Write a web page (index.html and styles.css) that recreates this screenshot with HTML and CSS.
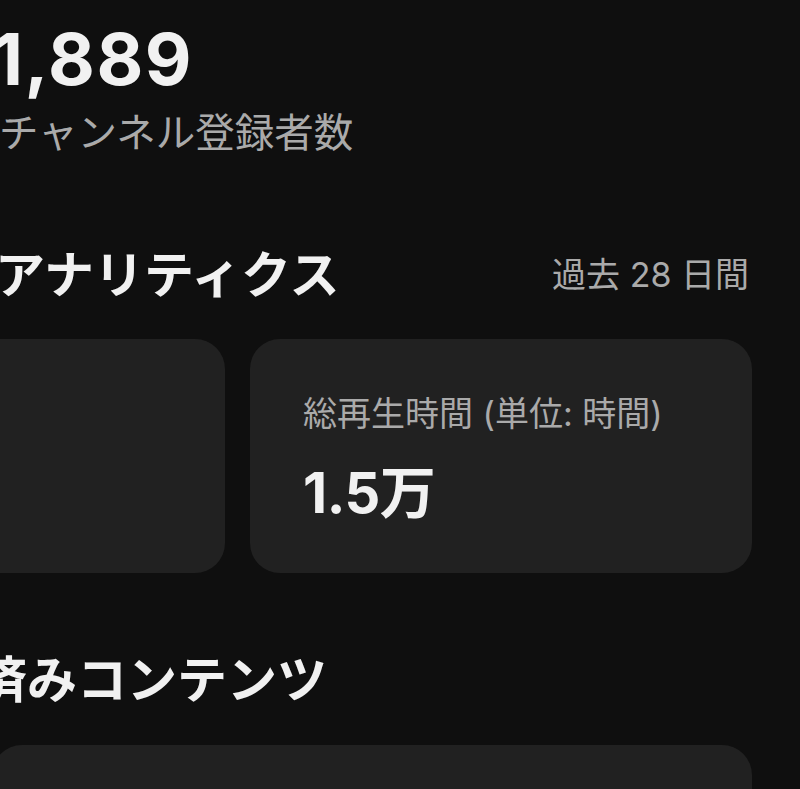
FILE: index.html
```html
<!DOCTYPE html>
<html lang="ja">
<head>
    <meta charset="UTF-8">
    <meta name="viewport" content="width=device-width, initial-scale=1.0">
    <title>チャンネル ダッシュボード</title>
    <link rel="stylesheet" href="styles.css">
</head>
<body>
<main class="dashboard">
    <!-- 登録者 -->
    <section class="summary">
        <div class="subs-count">1,889</div>
        <div class="subs-label">チャンネル登録者数</div>
    </section>

    <!-- アナリティクス -->
    <section class="analytics">
        <div class="section-head">
            <h2 class="section-title">アナリティクス</h2>
            <span class="period">過去 28 日間</span>
        </div>

        <div class="metric-row">
            <div class="metric-card">
                <div class="metric-label">視聴回数</div>
                <div class="metric-value">32.4万</div>
            </div>
            <div class="metric-card">
                <div class="metric-label">総再生時間 (単位: 時間)</div>
                <div class="metric-value">1.5万</div>
            </div>
        </div>
    </section>

    <!-- 公開済みコンテンツ -->
    <section class="published">
        <h2 class="section-title published-title">公開済みコンテンツ</h2>
        <div class="content-card"></div>
    </section>
</main>
</body>
</html>
```

FILE: styles.css
```css
html, body {
    margin: 0;
    height: 100%;
}

body {
    background-color: #0f0f0f;
    color: #f1f1f1;
    font-family: Inter, 'Noto Sans CJK JP', sans-serif;
    overflow: hidden;
}

.dashboard {
    margin-left: -8px;
    padding: 23px 48px 0 0;
}

.subs-count {
    font-size: 72px;
    line-height: 1;
    font-weight: 700;
    letter-spacing: 1.5px;
}

.subs-label {
    margin-top: 19px;
    font-size: 39.5px;
    line-height: 1;
    color: #aaaaaa;
    padding-left: 7px;
}

.analytics {
    margin-top: 96px;
}

.section-head {
    display: flex;
    justify-content: space-between;
    align-items: center;
}

.section-title {
    margin: 0 0 0 3px;
    font-size: 50px;
    line-height: 1;
    font-weight: 700;
}

.period {
    font-size: 34px;
    line-height: 1;
    color: #aaaaaa;
    padding-right: 3px;
}

.metric-row {
    display: grid;
    grid-template-columns: 1fr 1fr;
    gap: 25px;
    margin-left: -269px;
    margin-top: 39px;
}

.metric-card {
    background-color: #212121;
    border-radius: 30px;
    height: 234px;
    padding: 58px 50px 0 53px;
    box-sizing: border-box;
}

.metric-label {
    font-size: 34px;
    line-height: 1;
    color: #aaaaaa;
}

.metric-value {
    margin-top: 34px;
    font-size: 56px;
    line-height: 1;
    font-weight: 700;
    letter-spacing: -0.5px;
}

.published {
    margin-top: 82px;
}

.published-title {
    margin-left: -115px;
}

.content-card {
    margin-top: 40px;
    height: 200px;
    background-color: #212121;
    border-radius: 30px;
}
```
